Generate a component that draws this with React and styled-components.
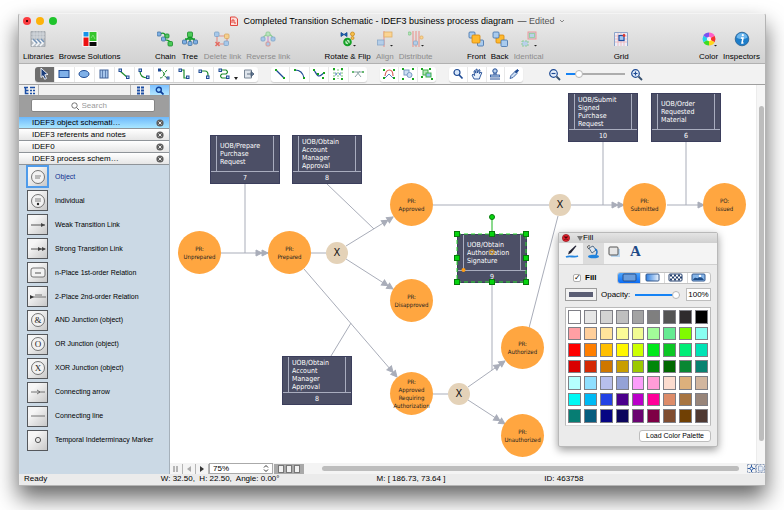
import React from 'react'
import styled, { createGlobalStyle } from 'styled-components';

const GREEN = '#1e8a2c'
const NAVY = '#1f4b94'

/* ---------- small drawing helpers ---------- */

const Pic = ({ w = 16, h = w, box, children }) => (
  <svg width={w} height={h} viewBox={`0 0 ${box || w} ${box ? (box * h) / w : h}`} fill="none" aria-hidden="true">
    {children}
  </svg>
)

const Sq = ({ x, y, s = 3, fill = '#cfe0f5', stroke = NAVY }) => (
  <rect x={x} y={y} width={s} height={s} fill={fill} stroke={stroke} strokeWidth="1" />
)

const Dot = ({ x, y, fill = '#18a51e' }) => <rect x={x} y={y} width="2" height="2" fill={fill} />

const Block = ({ x, y, s = 5, fill = '#7fb0e4', stroke = '#41719f' }) => (
  <rect x={x} y={y} width={s} height={s} rx="1" fill={fill} stroke={stroke} strokeWidth=".8" />
)

/* ---------- toolbar icons ---------- */

const toolbarIcons = {
  libraries: (
    <>
      <rect x="1" y="0" width="14" height="16" rx="1" fill="#b9bfc5" stroke="#94999e" strokeWidth=".8" />
      <path d="M4 0v8M7 0v8M10 0v8M13 0v8M1 3h14M1 6h14" stroke="#dfe3e7" strokeWidth=".6" />
      <path d="M2 9l3 3-3 3M6 9l3 3-3 3M10 9l3 3-3 3" stroke="#f4f7fb" strokeWidth="1.6" />
      <path d="M3 8l4 4M7 8l4 4M11 8l3 3" stroke="#7293b8" strokeWidth="1.2" />
    </>
  ),
  browse: (
    <>
      <rect x="0" y="0" width="16" height="16" rx="1" fill="#fff" stroke="#d5d5d5" strokeWidth=".6" />
      <rect x="1.5" y="1" width="5" height="4.5" fill="#1693e8" />
      <rect x="7.5" y="1" width="7" height="9" fill="#35c52c" />
      <rect x="1.5" y="6.5" width="5" height="8.5" fill="#ec1010" />
      <rect x="7.5" y="11" width="7" height="4" fill="#0a0a0a" />
      <path d="M9 7l2-3 2 4" stroke="#8be385" strokeWidth=".8" />
    </>
  ),
  chain: (
    <>
      <path d="M3 3c4-2 6 0 5 4s5 0 6 6" stroke="#159e2b" strokeWidth="1.2" />
      <Block x="0" y="1" s={4} />
      <Block x="4.500" y="6" s={4} />
      <Block x="8" y="3" s={4} fill="#57c566" stroke="#188a2a" />
      <Block x="11" y="10.5" s={4.5} fill="#4ccb58" stroke="#188a2a" />
    </>
  ),
  tree: (
    <>
      <path d="M8 5L2 11M8 5v7M8 5l6 6M3 8h10" stroke="#159e2b" strokeWidth="1.4" />
      <Block x="5.5" y="1" fill="#4ccb58" stroke="#188a2a" />
      <Block x=".5" y="9" s={4} />
      <Block x="6" y="10.5" s={4} />
      <Block x="11.5" y="9" s={4} />
    </>
  ),
  deleteLink: (
    <>
      <path d="M3 4v9h10V5H5" stroke="#e2918a" strokeWidth="1.2" />
      <Block x=".5" y="1" s={4.5} fill="#a7c8ea" stroke="#7fa3c7" />
      <Block x="10.5" y="3" s={4.5} fill="#f5cf8e" stroke="#d8a860" />
      <Block x="10" y="10" s={4.5} fill="#a7c8ea" stroke="#7fa3c7" />
      <path d="M1.500 11l4 4M5.500 11l-4 4" stroke="#e36a60" strokeWidth="1.5" />
    </>
  ),
  reverseLink: (
    <>
      <path d="M3 9c0-6 9-8 10-1" stroke="#8fd094" strokeWidth="1.4" />
      <path d="M8 5v6" stroke="#c89adb" strokeWidth="1.3" />
      <Block x="1" y="6" s={4} fill="#a7c8ea" stroke="#7fa3c7" />
      <Block x="6" y="1" s={4} fill="#b9e4bd" stroke="#8ec894" />
      <Block x="11" y="6" s={4} fill="#a7c8ea" stroke="#7fa3c7" />
      <Block x="6" y="11" s={4} fill="#a7c8ea" stroke="#e08a82" />
    </>
  ),
  rotate: (
    <>
      <path d="M1 1.500l3 2 3-2v4l-3-2-3 2z" fill="#1e62b4" stroke="#134a8d" strokeWidth=".8" />
      <circle cx="12.500" cy="3" r="2" fill="#f8c04b" stroke="#c98a1a" strokeWidth=".8" />
      <circle cx="12.500" cy="7" r="1.500" fill="#f8c04b" stroke="#c98a1a" strokeWidth=".8" />
      <circle cx="7.500" cy="11" r="3.300" fill="#b6ecb9" stroke="#14a326" strokeWidth="2" />
      <path d="M5 8l5 6" stroke="#0e7e1b" strokeWidth="1" />
      <path d="M13 14h3l-1.500 1.500z" fill="#222" />
    </>
  ),
  align: (
    <>
      <path d="M7 0v16" stroke="#eb8e86" strokeWidth="1" />
      <rect x="7" y="1" width="8" height="5" fill="#fbd493" stroke="#dfae64" strokeWidth=".8" />
      <rect x=".500" y="9" width="6.500" height="5" fill="#b4cee9" stroke="#89a9ca" strokeWidth=".8" />
      <path d="M13 14h3l-1.500 1.500z" fill="#222" />
    </>
  ),
  distribute: (
    <>
      <path d="M5 0v16M8 0v16M11 0v16" stroke="#eb8e86" strokeWidth="1" />
      <Block x="0" y="1" s={3} fill="#b9e4bd" stroke="#7cc283" />
      <Block x="5.500" y="10" s={4} fill="#b4cee9" stroke="#89a9ca" />
      <Block x="12" y="5" s={3} fill="#fbd493" stroke="#dfae64" />
      <path d="M13 14h3l-1.500 1.500z" fill="#222" />
    </>
  ),
  front: (
    <>
      <Block x="1" y="1" s={6} fill="#a9cbee" stroke="#3f6fa8" />
      <Block x="9.500" y="9" s={6} fill="#a9cbee" stroke="#3f6fa8" />
      <Block x="4" y="4" s={8} fill="#ffb92e" stroke="#d68508" />
    </>
  ),
  back: (
    <>
      <Block x="4" y="4" s={8} fill="#ffb92e" stroke="#d68508" />
      <Block x="1" y="1" s={6} fill="#a9cbee" stroke="#3f6fa8" />
      <Block x="9" y="9" s={6.5} fill="#a9cbee" stroke="#3f6fa8" />
    </>
  ),
  identical: (
    <>
      <rect x="7" y="1" width="8" height="7" fill="#b9d0ea" stroke="#ee9c96" />
      <rect x="8.500" y="2.500" width="5" height="4" stroke="#8ecf94" strokeWidth=".8" />
      <rect x="1" y="10" width="6" height="5" fill="#b9d0ea" stroke="#8ecf94" strokeDasharray="2 1" />
      <path d="M13 14h3l-1.500 1.500z" fill="#222" />
    </>
  ),
  grid: (
    <>
      <path d="M1.500 15V1.500h13V15" fill="#eceef8" stroke="#8ea4ca" />
      <path d="M5 2v13M8 2v13M11 2v13M2 5h12M2 8h12M2 11h12" stroke="#f0aeb2" strokeWidth=".8" />
      <rect x="6" y="4.500" width="5" height="5" fill="#a4c7f0" stroke="#1d4fa5" strokeWidth="1.200" />
      <circle cx="11" cy="4.500" r="1.400" fill="#e0382e" />
    </>
  ),
  color: (
    <>
      <path d="M8 8V1.500A6.500 6.500 0 0 1 13.600 4.800z" fill="#ff5dc8" />
      <path d="M8 8l5.600-3.200a6.500 6.500 0 0 1 0 6.400z" fill="#f7302f" />
      <path d="M8 8l5.600 3.200A6.500 6.500 0 0 1 8 14.500z" fill="#ffd51b" />
      <path d="M8 8v6.500a6.500 6.500 0 0 1-5.600-3.300z" fill="#3fdc24" />
      <path d="M8 8l-5.600 3.200a6.500 6.500 0 0 1 0-6.400z" fill="#22d2e8" />
      <path d="M8 8L2.400 4.800A6.500 6.500 0 0 1 8 1.500z" fill="#7a53f0" />
      <circle cx="8" cy="8" r="2.200" fill="#fff" opacity=".85" />
      <path d="M13 14h3l-1.500 1.500z" fill="#222" />
    </>
  ),
  inspectors: (
    <>
      <circle cx="8" cy="8" r="6.800" fill="#1d7dc9" stroke="#2a5f91" strokeWidth=".8" />
      <path d="M2.500 6.500a5.600 5.600 0 0 1 11 0c-3 2-8 2-11 0z" fill="#6db6ec" />
      <circle cx="8.800" cy="4.200" r="1.100" fill="#fff" />
      <path d="M7 7h2l-1 5h1.500" stroke="#fff" strokeWidth="1.500" />
    </>
  ),
}

/* ---------- drawing tool icons, 12 x 12 ---------- */

const toolIcons = {
  pointer: <path d="M3 0l7 6.500-3.200.3 1.700 3.600-1.800.9L5 7.700 3 9.500z" fill="#1c3f7c" stroke="#fff" strokeWidth=".9" />,
  rect: <rect x="1" y="2.500" width="10" height="7" fill="#7fb0e8" stroke={NAVY} />,
  ellipse: <ellipse cx="6" cy="6" rx="5" ry="3.500" fill="#7fb0e8" stroke={NAVY} />,
  text: (
    <>
      <rect x="2" y="2" width="8" height="8" fill="#a7c6ec" stroke="#41629a" />
      <path d="M4.500 2v8M7.500 2v8" stroke="#41629a" strokeWidth=".7" />
    </>
  ),
  line: <><path d="M2 3l8 7" stroke={GREEN} strokeWidth="1.200" /><Sq x="1" y="1" s={2.5} /><Sq x="8.500" y="8" s={2.5} /></>,
  arc: <><path d="M2 3c0 5 3 7 8 7" stroke={GREEN} strokeWidth="1.200" /><Sq x="1" y="1" s={2.5} /><Sq x="8.500" y="8" s={2.5} /></>,
  split: (
    <>
      <path d="M2 2c6 1 2 7 8 8M2 10c5 0 4-8 8-8" stroke={GREEN} strokeDasharray="3 1" />
      <Sq x=".500" y="1" s={2} /><Sq x="9" y="9" s={2} />
    </>
  ),
  elbow: <><path d="M2 2h4v8h4" stroke={GREEN} strokeWidth="1.200" /><Sq x="1" y="1" s={2.5} /><Sq x="8.500" y="8" s={2.5} /></>,
  round: <><path d="M2 3h5q3 0 3 4v3" stroke={GREEN} strokeWidth="1.200" /><Sq x="1" y="2" s={2.5} /><Sq x="8.500" y="8" s={2.5} /></>,
  snake: <><path d="M2 2h6q3 2 0 4H4q-3 2 0 4h5" stroke={GREEN} strokeWidth="1.200" /><Sq x="1" y="1" s={2.5} /><Sq x="8.500" y="8" s={2.5} /></>,
  page: (
    <>
      <path d="M1.500 2h7v8h-7z" fill="#dfe5ec" stroke="#7a8796" />
      <path d="M4 6h5M8 3.500L11 6 8 8.500z" stroke="#3c5068" fill="#6c83a0" strokeWidth=".8" />
    </>
  ),
  straight: <><path d="M2 2l8 8" stroke={NAVY} strokeWidth="1.200" /><Dot x="1" y="1" /><Dot x="9" y="9" /></>,
  curve: <><path d="M1 2c5 0 8 3 9 8" stroke={NAVY} strokeWidth="1.200" /><Dot x="0" y="1" /><Dot x="9" y="9" /></>,
  spline: <><path d="M1 2c2 3 3 6 5 6s3-2 5-3" stroke={NAVY} strokeWidth="1.200" /><Dot x="0" y="1" /><Dot x="4" y="5" /><Dot x="10" y="4" /><Dot x="9" y="9" /></>,
  mirror: (
    <>
      <path d="M2 1v10M10 1v10M6 1v10" stroke="#7bc77f" strokeDasharray="2 1" />
      <path d="M3.500 4v4L5 6zM8.500 4v4L7 6z" fill="#2c62ab" />
      <Dot x="1" y="0" /><Dot x="9" y="0" /><Dot x="1" y="10" /><Dot x="9" y="10" />
    </>
  ),
  cut: <><path d="M0 4h12M3 9l5-6M9 9L5 4" stroke="#8ba5a6" /><Dot x="0" y="3" fill="#66b870" /><Dot x="10" y="3" fill="#66b870" /></>,
  editArc: <><path d="M2 8c1-8 8-8 8 0" stroke="#d96058" strokeWidth="1.200" /><path d="M2 10l4-4 4 4" stroke="#5c86bd" /><Dot x="0" y="1" /><Dot x="10" y="1" /><Dot x="0" y="9" /><Dot x="10" y="9" /></>,
  group: (
    <>
      <rect x="2" y="2" width="5" height="5" fill="#cddff3" stroke="#7b9cc4" /><circle cx="7.500" cy="7" r="2.500" fill="#cddff3" stroke="#7b9cc4" />
      <Dot x="0" y="0" /><Dot x="10" y="0" /><Dot x="0" y="10" /><Dot x="10" y="10" />
    </>
  ),
  ungroup: (
    <>
      <rect x="2" y="2" width="5" height="5" fill="#b9e5bd" stroke="#3fb04b" /><rect x="5" y="5" width="5" height="4" fill="#9cc3ee" stroke="#3fb04b" />
      <Dot x="0" y="0" /><Dot x="8" y="0" /><Dot x="0" y="8" /><Dot x="10" y="10" />
    </>
  ),
  zoom: <><circle cx="5" cy="4.500" r="3" fill="#d7e7fa" stroke={NAVY} strokeWidth="1.200" /><path d="M7.200 7l3.300 3.500" stroke={NAVY} strokeWidth="1.700" /></>,
  hand: <path d="M3 11L1 7l1-.8 1.600 1.400L3 3l1-.4.9 2.600.1-4 1.100 0 .5 3.800L8 1.600l1 .4-.6 3.600L10 4l.8.7L9 9l-.6 2z" fill="#e8f1fc" stroke={NAVY} strokeWidth=".9" />,
  stamp: (
    <>
      <circle cx="6" cy="3" r="2.200" fill="#bcd3ee" stroke={NAVY} /><path d="M5 5v2M7 5v2" stroke={NAVY} />
      <rect x="1.500" y="7" width="9" height="2" fill="#bcd3ee" stroke={NAVY} strokeWidth=".8" /><path d="M1 11h10" stroke={NAVY} />
    </>
  ),
  dropper: <><path d="M2 10.500l1-3 4-4 2 2-4 4z" fill="#cfe0f5" stroke={NAVY} strokeWidth=".8" /><path d="M7 3.500L9.500 1.500l1 1L8.500 5z" fill={NAVY} stroke={NAVY} /></>,
}

const Magnifier = ({ plus }) => (
  <Pic w={13}>
    <circle cx="5.500" cy="5.500" r="3.800" fill="#e6f0fb" stroke={NAVY} strokeWidth="1.200" />
    <path d="M8.500 8.500l3.500 3.500" stroke="#37506e" strokeWidth="1.800" />
    <path d={plus ? 'M3.500 5.500h4M5.500 3.500v4' : 'M3.500 5.500h4'} stroke={NAVY} strokeWidth="1.200" />
  </Pic>
)

/* ---------- library tiles, 20 x 20 ---------- */

const ring = <circle cx="10" cy="10" r="6.500" fill="#f2f2f2" stroke="#555" strokeWidth=".8" />
const shaft = <path d="M3 10h14" stroke="#555" />

const letterTile = (ch) => (
  <>
    {ring}
    <text x="10" y="13" textAnchor="middle" fontSize="9" fontFamily="Liberation Serif, serif" fill="#222">{ch}</text>
  </>
)

const libraryItems = [
  { name: 'Object', active: true, art: <>{ring}<path d="M7 9h6M7 11h5" stroke="#666" strokeWidth=".8" /></> },
  { name: 'Individual', art: <>{ring}<path d="M7 8h6M7 10h6" stroke="#666" strokeWidth=".8" /><circle cx="10" cy="13" r="1.200" fill="#222" /></> },
  { name: 'Weak Transition Link', art: <>{shaft}<path d="M13 8l4 2-4 2z" fill="#444" /></> },
  { name: 'Strong Transition Link', art: <>{shaft}<path d="M10 8l4 2-4 2zM14 8l4 2-4 2z" fill="#444" /></> },
  { name: 'n-Place 1st-order Relation', art: <><rect x="3" y="5" width="14" height="9" rx="2" fill="#f2f2f2" stroke="#555" strokeWidth=".8" /><path d="M7 10h6" stroke="#555" /></> },
  { name: '2-Place 2nd-order Relation', art: <><path d="M3 10h15M7 8h7" stroke="#555" strokeWidth=".8" /><path d="M2 8l4 2-4 2z" fill="#333" /></> },
  { name: 'AND Junction (object)', art: letterTile('&') },
  { name: 'OR Junction (object)', art: letterTile('O') },
  { name: 'XOR Junction (object)', art: letterTile('X') },
  { name: 'Connecting arrow', art: <><path d="M3 10h14M9 8l3 2-3 2" stroke="#555" strokeWidth=".8" /></> },
  { name: 'Connecting line', art: <path d="M3 10h14" stroke="#555" strokeWidth=".8" /> },
  { name: 'Temporal Indeterminacy Marker', art: <circle cx="10" cy="10" r="2.600" stroke="#555" /> },
]

const libraries = ['IDEF3 object schemati…', 'IDEF3 referents and notes', 'IDEF0', 'IDEF3 process schem…']

/* ---------- toolbar data ---------- */

const toolbarGroups = [
  { grow: 1, items: [['libraries', 'Libraries'], ['browse', 'Browse Solutions']] },
  { grow: 1, items: [['chain', 'Chain'], ['tree', 'Tree'], ['deleteLink', 'Delete link', true], ['reverseLink', 'Reverse link', true]] },
  { grow: 1, items: [['rotate', 'Rotate & Flip'], ['align', 'Align', true], ['distribute', 'Distribute', true]] },
  { grow: 2, items: [['front', 'Front'], ['back', 'Back'], ['identical', 'Identical', true]] },
  { grow: 2, items: [['grid', 'Grid']] },
  { grow: 0, items: [['color', 'Color'], ['inspectors', 'Inspectors']] },
]

const toolGroups = [
  { width: 223, tools: ['pointer', 'rect', 'ellipse', 'text', 'line', 'arc', 'split', 'elbow', 'round', 'snake', 'more', 'page'] },
  { width: 96, tools: ['straight', 'curve', 'spline', 'mirror', 'cut'] },
  { width: 56, tools: ['editArc', 'group', 'ungroup'] },
  { width: 74, tools: ['zoom', 'hand', 'stamp', 'dropper'] },
]

/* ---------- diagram data, centres of nodes on the canvas ---------- */

const states = [
  { x: 30, y: 168, text: ['PR:', 'Unprepared'] },
  { x: 120, y: 168, text: ['PR:', 'Prepared'] },
  { x: 242, y: 120, text: ['PR:', 'Approved'] },
  { x: 242, y: 216, text: ['PR:', 'Disapproved'] },
  { x: 242, y: 309, text: ['PR:', 'Approved', 'Requiring', 'Authorization'] },
  { x: 353, y: 263, text: ['PR:', 'Authorized'] },
  { x: 353, y: 351, text: ['PR:', 'Unauthorized'] },
  { x: 475, y: 120, text: ['PR:', 'Submitted'] },
  { x: 555, y: 120, text: ['PO:', 'Issued'] },
]

const junctions = [{ x: 167, y: 168 }, { x: 390, y: 120 }, { x: 289, y: 309 }]

const units = [
  { x: 40, y: 50, n: 7, text: ['UOB/Prepare', 'Purchase', 'Request'] },
  { x: 122, y: 50, n: 8, text: ['UOB/Obtain', 'Account', 'Manager', 'Approval'] },
  { x: 112, y: 271, n: 8, text: ['UOB/Obtain', 'Account', 'Manager', 'Approval'] },
  { x: 287, y: 149, n: 9, text: ['UOB/Obtain', 'Authorization', 'Signature'] },
  { x: 398, y: 8, n: 10, text: ['UOB/Submit', 'Signed', 'Purchase', 'Request'] },
  { x: 481, y: 8, n: 6, text: ['UOB/Order', 'Requested', 'Material'] },
]

// [x1, y1, x2, y2, number of arrow heads]
const links = [
  [51, 168, 98, 168, 2],
  [75, 99, 75, 168, 0],
  [157, 99, 204, 144, 0],
  [141, 168, 156, 168, 0],
  [176, 161, 223, 132, 2],
  [176, 174, 223, 204, 2],
  [134, 184, 227, 292, 2],
  [161, 271, 181, 238, 0],
  [263, 120, 379, 120, 0],
  [401, 120, 454, 120, 2],
  [433, 57, 433, 120, 0],
  [497, 120, 534, 120, 1],
  [516, 57, 516, 120, 0],
  [322, 198, 322, 285, 0],
  [263, 309, 278, 309, 0],
  [298, 302, 335, 276, 2],
  [298, 315, 335, 339, 2],
  [359, 243, 388, 131, 0],
]

const palette = [
  '#ffffff', '#e6e6e6', '#d3d3d3', '#bfbfbf', '#a3a3a3', '#7f7f7f', '#545454', '#2f2b2d', '#000000',
  '#ff9fa4', '#ffcf9b', '#ffe49b', '#fbfb97', '#f1fb93', '#a2fb99', '#65ea92', '#80fb00', '#88fff2',
  '#fe0000', '#ff7f00', '#ffbf00', '#fff700', '#ccff00', '#00e81b', '#0cc624', '#00ee76', '#00e3b5',
  '#d90000', '#d42a05', '#cf7700', '#c99e00', '#9cc900', '#008709', '#006700', '#098733', '#098270',
  '#b5ffff', '#90dfff', '#b7bfec', '#94a2d6', '#fb9dfa', '#ff9cd8', '#fcdccf', '#dcb07c', '#d2b69f',
  '#00f8f4', '#00baf5', '#2242e4', '#4b008b', '#ba00c9', '#fe0099', '#dd8c6a', '#a87541', '#98857a',
  '#067d73', '#075d7f', '#060583', '#0c055d', '#6a0371', '#7e0045', '#804d30', '#704004', '#4f3932',
]

const Link = ({ x1, y1, x2, y2, heads }) => {
  const angle = (Math.atan2(y2 - y1, x2 - x1) * 180) / Math.PI
  return (
    <>
      <line x1={x1} y1={y1} x2={x2} y2={y2} />
      <g transform={`translate(${x2} ${y2}) rotate(${angle})`}>
        {heads > 0 && <path d="M0 0l-6-3v6z" />}
        {heads > 1 && <path d="M-6 0l-6-3v6z" />}
      </g>
    </>
  )
}

const Diagram = () => (
  <>
    <Links>
      {links.map(([x1, y1, x2, y2, heads], i) => (
        <Link key={i} x1={x1} y1={y1} x2={x2} y2={y2} heads={heads} />
      ))}
    </Links>
    {states.map((s) => (
      <State key={s.text.join()} $x={s.x} $y={s.y}>
        {s.text.map((t) => <span key={t}>{t}</span>)}
      </State>
    ))}
    {junctions.map((j) => <Junction key={j.x} $x={j.x} $y={j.y}>X</Junction>)}
    {units.map((u) => (
      <Unit key={u.x} $x={u.x} $y={u.y}>
        <UnitText>{u.text.map((t) => <span key={t}>{t}</span>)}</UnitText>
        <UnitNumber>{u.n}</UnitNumber>
      </Unit>
    ))}
    <Selection viewBox="0 0 76 76">
      <rect x="3" y="21" width="69" height="48" stroke="#2fe02f" strokeDasharray="4 3" />
      <path d="M38 6v15" stroke="#18b51d" />
      <circle cx="38" cy="4" r="2.500" fill="#06d40f" stroke="#08790c" />
      {[[3, 21], [38, 21], [72, 21], [3, 45], [72, 45], [3, 69], [38, 69], [72, 69]].map(([x, y]) => (
        <rect key={`${x} ${y}`} x={x - 2.5} y={y - 2.5} width="5" height="5" fill="#06d40f" stroke="#08790c" />
      ))}
      <circle cx="38" cy="39" r="2.200" stroke="#f5a300" />
      <circle cx="9.500" cy="57" r="2" fill="#ff9c12" />
    </Selection>
  </>
)

const FillPanel = () => (
  <Panel>
    <PanelTitle>
      <PanelClose aria-label="Close">
        <Pic w={8}>
          <circle cx="4" cy="4" r="3.600" fill="#e2202c" stroke="#8d1119" strokeWidth=".7" />
          <path d="M2.500 2.500l3 3M5.500 2.500l-3 3" stroke="#4d0508" strokeWidth="1.200" />
        </Pic>
      </PanelClose>
      <Pic w={6}><path d="M0 1h6L3 6z" fill="#777" /></Pic>
      Fill
    </PanelTitle>
    <PanelTabs>
      <PanelTab aria-label="Line">
        <Pic w={14}><path d="M11.500 1L6 8l-3 1.500L4 6.500 10.500.5z" fill="#223" /><path d="M1 12c4-2 8 1 12-1" stroke="#2586e0" strokeWidth="1.800" /></Pic>
      </PanelTab>
      <PanelTab $active aria-label="Fill">
        <Pic w={14}>
          <path d="M3 3l4-2 3 4-4 3z" fill="#dfe6ee" stroke="#33506e" strokeWidth=".8" />
          <path d="M9 4c3 1 2 4 1 6" stroke="#1772cf" strokeWidth="1.500" />
          <ellipse cx="7.500" cy="11.500" rx="5.500" ry="1.800" fill="#1f83de" />
          <path d="M3 4C0 2 2 0 4 1" stroke="#333" strokeWidth=".8" />
        </Pic>
      </PanelTab>
      <PanelTab aria-label="Shadow">
        <Pic w={14}><rect x="4" y="4" width="9" height="8" fill="#b8d5ee" /><rect x="2" y="2" width="9" height="8" rx="1" fill="#e6e6e6" stroke="#555" /></Pic>
      </PanelTab>
      <PanelTab aria-label="Text"><Letter>A</Letter></PanelTab>
    </PanelTabs>
    <PanelBody>
      <PanelRow>
        <Check><input type="checkbox" defaultChecked />Fill</Check>
        <Kinds>
          <Kind $active aria-label="Solid"><Pic w={15} h={9}><rect x="1" y="1" width="13" height="7" rx="1" fill="#6a9ddb" stroke="#28518c" /></Pic></Kind>
          <Kind aria-label="Gradient">
            <Pic w={15} h={9}>
              <linearGradient id="fade"><stop stopColor="#2f7fe0" /><stop offset="1" stopColor="#eef5fd" /></linearGradient>
              <rect x="1" y="1" width="13" height="7" rx="1" fill="url(#fade)" stroke="#35588c" />
            </Pic>
          </Kind>
          <Kind aria-label="Pattern">
            <Pic w={15} h={9}>
              <rect x="1" y="1" width="13" height="7" rx="1" fill="#fff" stroke="#24406e" />
              <path d="M2 2.500h12M2 6.500h12" stroke="#24406e" strokeWidth="2" strokeDasharray="2 2" />
              <path d="M4 4.500h10" stroke="#24406e" strokeWidth="2" strokeDasharray="2 2" />
            </Pic>
          </Kind>
          <Kind aria-label="Picture">
            <Pic w={15} h={9}><rect x="1" y="1" width="13" height="7" rx="1" fill="#86b6ea" stroke="#35588c" /><path d="M2 7c2-4 4-1 5-2s3-2 6 2z" fill="#1d4c88" /><circle cx="9" cy="3" r="1.200" fill="#fff" /></Pic>
          </Kind>
        </Kinds>
      </PanelRow>
      <PanelRow>
        <Well aria-label="Fill color" />
        <OpacityLabel htmlFor="opacity">Opacity:</OpacityLabel>
        <Range id="opacity" type="range" defaultValue="100" $fill={95} />
        <Percent aria-label="Opacity value" defaultValue="100%" />
      </PanelRow>
      <Palette>
        {palette.map((c) => <Swatch key={c} $color={c} aria-label={c} />)}
      </Palette>
      <Load>Load Color Palette</Load>
    </PanelBody>
  </Panel>
)

const Sidebar = () => (
  <Side>
    <SideTabs>
      <SideTab aria-label="Tree">
        <Pic w={12} h={9}><path d="M1 1.500h4M2.500 2v5.500h3M2.500 4.500h3M7 1.500h5M7 4.500h2M10 4.500h2M7 7.500h2M10 7.500h2" stroke="#1d4fa5" strokeWidth="1.500" /></Pic>
      </SideTab>
      <SideBlank />
      <SideTab aria-label="Grid">
        <Pic w={9}>{[0, 3, 6].map((y) => <path key={y} d={`M1 ${y + 1.5}h3M5 ${y + 1.5}h3`} stroke="#1d4fa5" strokeWidth="2" />)}</Pic>
      </SideTab>
      <SideTab $active aria-label="Search">
        <Pic w={9}><circle cx="3.800" cy="3.800" r="2.500" stroke="#0e3f9a" strokeWidth="1.400" /><path d="M5.600 5.600L8.500 8.500" stroke="#0e3f9a" strokeWidth="1.800" /></Pic>
      </SideTab>
    </SideTabs>
    <SearchBand>
      <SearchBox>
        <Pic w={8}><circle cx="3.500" cy="3.500" r="2.700" stroke="#666" strokeWidth=".9" /><path d="M5.500 5.500L8 8" stroke="#666" /></Pic>
        <input type="text" aria-label="Search" placeholder="Search" />
      </SearchBox>
    </SearchBand>
    {libraries.map((name, i) => (
      <LibraryRow key={name} $active={i === 0}>
        <button>{name}</button>
        <button aria-label={`Close ${name}`}>
          <Pic w={8}><circle cx="4" cy="4" r="3.600" fill="#5e5e5e" /><path d="M2.500 2.500l3 3M5.500 2.500l-3 3" stroke="#e8e8e8" /></Pic>
        </button>
      </LibraryRow>
    ))}
    <Items>
      {libraryItems.map((item) => (
        <Item key={item.name} $active={item.active}>
          <Tile $active={item.active}><Pic w={20}>{item.art}</Pic></Tile>
          {item.name}
        </Item>
      ))}
    </Items>
  </Side>
)

const App = () => {
  return (
    <>
      <GlobalStyle />
      <Page>
        <Window>
          <Header>
            <TitleBar>
              <Lights>
                <Light $color="#fb3b3f" aria-label="Close"><i /></Light>
                <Light $color="#fdb20a" aria-label="Minimize" />
                <Light $color="#1fc42c" aria-label="Zoom" />
              </Lights>
              <Title>
                <Pic w={10} h={10}><path d="M1.500 1h5l2 2v6.500h-7z" fill="#fbdcd8" stroke="#e0453c" /><path d="M3 7V4h2v3h2" stroke="#e0453c" /></Pic>
                Completed Transition Schematic - IDEF3 business process diagram
                <Edited>— <button>Edited</button></Edited>
                <Pic w={6} h={4}><path d="M1 1l2 2 2-2" stroke="#888" /></Pic>
              </Title>
            </TitleBar>
            <Toolbar>
              {toolbarGroups.map((g, i) => (
                <React.Fragment key={i}>
                  <ToolbarGroup>
                    {g.items.map(([icon, label, off]) => (
                      <ToolbarButton key={icon} disabled={off}>
                        <Pic w={16}>{toolbarIcons[icon]}</Pic>
                        {label}
                      </ToolbarButton>
                    ))}
                  </ToolbarGroup>
                  <Spacer $grow={g.grow} />
                </React.Fragment>
              ))}
            </Toolbar>
          </Header>

          <ToolStrip>
            {toolGroups.map((g) => (
              <Segments key={g.width} $width={g.width}>
                {g.tools.map((t) => t === 'more' ? (
                  <MoreTools key={t} aria-label="More connectors"><Pic w={4}><path d="M0 1h4L2 4z" fill="#222" /></Pic></MoreTools>
                ) : (
                  <Segment key={t} $active={t === 'pointer'} aria-label={t}><Pic w={12}>{toolIcons[t]}</Pic></Segment>
                ))}
              </Segments>
            ))}
            <Zoomer>
              <PlainButton aria-label="Zoom out"><Magnifier /></PlainButton>
              <Range type="range" aria-label="Zoom" defaultValue="18" $fill={22} />
              <PlainButton aria-label="Zoom in"><Magnifier plus /></PlainButton>
            </Zoomer>
          </ToolStrip>

          <Main>
            <Sidebar />
            <Work>
              <CanvasRow>
                <Canvas>
                  <Diagram />
                  <FillPanel />
                </Canvas>
                <VScroll><VThumb /></VScroll>
              </CanvasRow>
              <Footer>
                <FootButton aria-label="Split"><Pic w={8}><path d="M2 1v6M5 1v6" stroke="#777" /></Pic></FootButton>
                <FootButton aria-label="Previous page"><Pic w={8}><path d="M6 1v6L2 4z" fill="#aaa" /></Pic></FootButton>
                <FootButton aria-label="Next page"><Pic w={8}><path d="M2 1v6l4-3z" fill="#333" /></Pic></FootButton>
                <Scale>
                  <select aria-label="Scale" defaultValue="75%"><option>75%</option><option>100%</option></select>
                  <Pic w={6} h={9}><path d="M1 3.500l2-2 2 2M1 5.500l2 2 2-2" stroke="#333" /></Pic>
                </Scale>
                <Pages><i /><i /><i /></Pages>
                <HScroll />
                <PlainButton aria-label="Fit page">
                  <Pic w={9}><rect x=".500" y=".500" width="8" height="8" stroke="#8d9db8" strokeDasharray="2 1" /><path d="M4.500 1v7M1 4.500h7" stroke="#2e5ca4" /><circle cx="4.500" cy="4.500" r="1.500" fill="#fff" stroke="#2e5ca4" /></Pic>
                </PlainButton>
                <PlainButton aria-label="Actual size">
                  <Pic w={9}><rect x=".500" y=".500" width="8" height="8" stroke="#8d9db8" strokeDasharray="2 1" /><path d="M2.500 2h3l1.500 1.500V7H2.500z" fill="#e7eef8" stroke="#8aa0c2" strokeWidth=".8" /></Pic>
                </PlainButton>
              </Footer>
            </Work>
          </Main>

          <Status>
            <span>Ready</span>
            <span>W: 32.50,&nbsp; H: 22.50,&nbsp; Angle: 0.00°</span>
            <span>M: [ 186.73, 73.64 ]</span>
            <span>ID: 463758</span>
          </Status>
        </Window>
      </Page>
    </>
  )
}

const GlobalStyle = createGlobalStyle`
  * { box-sizing: border-box; }
  body {
    margin: 0;
    background: #fff;
    color: #000;
    font-family: 'Liberation Sans', Arial, sans-serif;
    font-size: 8px;
    line-height: 10px;
  }
  button, input, select {
    margin: 0;
    padding: 0;
    border: 0;
    background: none;
    color: inherit;
    font: inherit;
  }
  svg { display: block; flex: none; }
`
const Page = styled.div`
  display: flex;
  min-height: 100vh;
  padding: 13px 18px 24px;
  overflow: hidden;
`
const Window = styled.div`
  flex: 1;
  min-width: 0;
  display: flex;
  flex-direction: column;
  border: 1px solid #b4b4b4;
  border-top-color: #f4f4f4;
  border-radius: 3px;
  background: #ebebeb;
  box-shadow: 0 12px 22px rgba(0, 0, 0, 0.6);
`
const Header = styled.header`
  background: linear-gradient(#ececec, #d2d2d2);
  border-bottom: 1px solid #b1b1b1;
  border-radius: 3px 3px 0 0;
`
const TitleBar = styled.div`
  display: flex;
  align-items: center;
  height: 14px;
  padding: 0 4px;
`
const Lights = styled.div`
  display: flex;
  gap: 5px;
  width: 36px;
`
const Light = styled.button`
  display: grid;
  place-items: center;
  width: 8px;
  height: 8px;
  border-radius: 50%;
  background: ${(p) => p.$color};

  i {
    width: 2px;
    height: 2px;
    background: #4d0407;
  }
`
const Title = styled.h1`
  flex: 1;
  display: flex;
  align-items: center;
  justify-content: center;
  gap: 4px;
  margin: 0;
  padding-right: 26px;
  font-size: 9px;
  font-weight: 400;
  white-space: nowrap;
`
const Edited = styled.span`
  button { color: #555; }
`
const Toolbar = styled.div`
  display: flex;
  padding: 3px 5px 1px 4px;
`
const ToolbarGroup = styled.div`
  display: flex;
  gap: 5px;
`
const Spacer = styled.div`
  flex: ${(p) => p.$grow} 0 0;
`
const ToolbarButton = styled.button`
  display: flex;
  flex-direction: column;
  align-items: center;
  gap: 5px;
  min-width: 18px;
  white-space: nowrap;

  &:disabled { color: #8c8c8c; }
`
const ToolStrip = styled.div`
  display: flex;
  align-items: center;
  gap: 13px;
  height: 21px;
  padding: 0 16px;
  background: #f2f2f2;
  border-bottom: 1px solid #9f9f9f;
`
const Segments = styled.div`
  display: flex;
  width: ${(p) => p.$width}px;
  height: 15px;
  background: #fff;
  border-radius: 3px;
  box-shadow: 0 1px 1px rgba(0, 0, 0, 0.15);
  overflow: hidden;
`
const Segment = styled.button`
  flex: 1;
  display: grid;
  place-items: center;
  min-width: 0;
  background: ${(p) => (p.$active ? '#6e6e6e' : 'none')};

  & + & { border-left: 1px solid #e8e8e8; }
`
const MoreTools = styled.button`
  display: grid;
  place-items: end center;
  width: 6px;
  padding-bottom: 2px;
`
const PlainButton = styled.button`
  display: block;
`
const Zoomer = styled.div`
  display: flex;
  align-items: center;
  gap: 5px;
  width: 95px;
  margin-left: 12px;
`
const Range = styled.input`
  flex: 1;
  appearance: none;
  min-width: 0;
  height: 8px;
  background: linear-gradient(90deg, #1583f5 ${(p) => p.$fill}%, #adadad 0) center / 100% 2px no-repeat;

  &::-webkit-slider-thumb {
    appearance: none;
    width: 8px;
    height: 8px;
    border: 1px solid #b5b5b5;
    border-radius: 50%;
    background: #fff;
  }
`
const Main = styled.main`
  flex: 1;
  display: flex;
`
const Side = styled.aside`
  display: flex;
  flex-direction: column;
  width: 151px;
  border-right: 1px solid #a6b1bb;
`
const SideTabs = styled.div`
  display: flex;
  height: 11px;
  background: #f1f1f1;
  border-bottom: 1px solid #9a9a9a;
`
const SideTab = styled.button`
  display: grid;
  place-items: center;
  width: 19px;
  background: ${(p) => (p.$active ? 'linear-gradient(#7cc0ff, #b2e6ff)' : 'none')};
`
const SideBlank = styled.div`
  flex: 1;
  border: solid #b5b5b5;
  border-width: 0 1px;
`
const SearchBand = styled.div`
  padding: 3px 14px 5px 12px;
  background: #9e9e9e;
`
const SearchBox = styled.label`
  display: flex;
  align-items: center;
  justify-content: center;
  gap: 3px;
  height: 13px;
  background: #fff;
  border: 1px solid #858585;
  border-radius: 2px;

  input {
    width: 34px;
    outline: 0;
  }
  input::placeholder { color: #9a9a9a; }
`
const LibraryRow = styled.div`
  display: flex;
  align-items: center;
  justify-content: space-between;
  height: 12px;
  padding: 0 5px 0 13px;
  border-bottom: 1px solid #8f9499;
  background: ${(p) => (p.$active ? 'linear-gradient(#6db8fb, #a8e6ff)' : 'linear-gradient(#fff, #e6e6e6)')};
`
const Items = styled.div`
  flex: 1;
  display: flex;
  flex-direction: column;
  padding: 0 0 22px 7px;
  background: #cbd9e5;
`
const Item = styled.button`
  flex: 1;
  display: flex;
  align-items: center;
  gap: 6px;
  color: ${(p) => (p.$active ? '#0d2f8f' : '#000')};
  font-size: 7px;
  text-align: left;
`
const Tile = styled.span`
  display: grid;
  place-items: center;
  width: 23px;
  height: 23px;
  border: 1px solid ${(p) => (p.$active ? '#4f9bea' : '#cbd9e5')};
  outline: 1px solid ${(p) => (p.$active ? '#4f9bea' : '#55585c')};
  outline-offset: -2px;
  background: linear-gradient(135deg, #f6f6f6 30%, #c4c4c4);
`
const Work = styled.section`
  flex: 1;
  display: flex;
  flex-direction: column;
  min-width: 0;
`
const CanvasRow = styled.div`
  flex: 1;
  display: flex;
`
const Canvas = styled.div`
  flex: 1;
  position: relative;
  background: #fff;
`
const VScroll = styled.div`
  display: flex;
  justify-content: center;
  width: 9px;
  padding: 21px 0 22px;
  background: #f6f6f6;
  border-left: 1px solid #ececec;
`
const VThumb = styled.div`
  width: 5px;
  border-radius: 3px;
  background: #bdbdbd;
`
const Footer = styled.div`
  display: flex;
  align-items: center;
  height: 11px;
  background: #f4f4f4;
`
const FootButton = styled.button`
  display: grid;
  place-items: center;
  width: 13px;
  height: 10px;
  border-right: 1px solid #b5b5b5;
`
const Scale = styled.div`
  display: flex;
  align-items: center;
  width: 64px;
  height: 11px;
  padding: 0 3px;
  background: #fff;
  border: 1px solid #aaa;

  select {
    flex: 1;
    appearance: none;
    line-height: 9px;
  }
`
const Pages = styled.div`
  display: flex;
  align-items: center;
  justify-content: center;
  gap: 2px;
  width: 30px;
  height: 10px;
  margin-left: 1px;
  background: #a9a9a9;

  i {
    width: 6px;
    height: 8px;
    border: 1px solid #777;
    background: #f1f1f1;
  }
`
const HScroll = styled.div`
  flex: 1;
  height: 5px;
  margin: 0 8px 0 18px;
  border-radius: 3px;
  background: #bdbdbd;
`
const Status = styled.footer`
  display: grid;
  grid-template-columns: 137fr 216fr 168fr 221fr;
  height: 11px;
  padding-left: 5px;
  background: #ebebeb;
`
const Links = styled.svg`
  position: absolute;
  inset: 0;
  width: 100%;
  height: 100%;
  stroke: #a9adb9;
  fill: #a9adb9;
`
const State = styled.div`
  position: absolute;
  left: ${(p) => p.$x - 22}px;
  top: ${(p) => p.$y - 22}px;
  display: flex;
  flex-direction: column;
  align-items: center;
  justify-content: center;
  width: 43px;
  height: 43px;
  border-radius: 50%;
  background: #ffa640;
  color: #222;
  font-family: 'DejaVu Sans Condensed', 'DejaVu Sans', sans-serif;
  font-size: 6px;
  line-height: 8px;
  white-space: nowrap;
`
const Junction = styled.div`
  position: absolute;
  left: ${(p) => p.$x - 11}px;
  top: ${(p) => p.$y - 11}px;
  display: grid;
  place-items: center;
  width: 22px;
  height: 22px;
  border-radius: 50%;
  background: #e4d2b8;
  color: #111;
  font-family: 'DejaVu Sans Condensed', 'DejaVu Sans', sans-serif;
  font-size: 11px;
`
const Unit = styled.div`
  position: absolute;
  left: ${(p) => p.$x}px;
  top: ${(p) => p.$y}px;
  display: flex;
  flex-direction: column;
  width: 70px;
  height: 49px;
  padding: 0 5px;
  background: #4c4f66;
  border: 1px solid #3b3e5c;
  color: #fff;
  font-family: 'DejaVu Sans Condensed', 'DejaVu Sans', sans-serif;
  font-size: 7px;
  line-height: 8px;
`
const UnitText = styled.div`
  display: flex;
  flex-direction: column;
  justify-content: center;
  height: 35px;
  padding-left: 3px;
  border: solid #a9adbf;
  border-width: 0 1px;
  white-space: nowrap;
`
const UnitNumber = styled.div`
  margin: 0 -5px;
  padding-top: 2px;
  border-top: 1px solid #a9adbf;
  text-align: center;
`
const Selection = styled.svg`
  position: absolute;
  left: 284px;
  top: 128px;
  width: 76px;
  height: 76px;
  fill: none;
`
const Panel = styled.div`
  position: absolute;
  left: 388px;
  top: 147px;
  width: 160px;
  border: 1px solid #b9b9b9;
  border-radius: 2px;
  background: #ebebeb;
  box-shadow: 0 3px 8px rgba(0, 0, 0, 0.4);
`
const PanelTitle = styled.div`
  display: flex;
  align-items: center;
  height: 10px;
  padding-left: 3px;
  background: linear-gradient(#e4e4e4, #cfcfcf);
`
const PanelClose = styled.button`
  margin-right: 7px;
`
const PanelTabs = styled.div`
  display: flex;
  height: 22px;
  padding-left: 3px;
  background: #f4f4f4;
  border-bottom: 1px solid #d0d0d0;
`
const PanelTab = styled.button`
  width: 21px;
  padding: 0 3px 3px;
  background: ${(p) => (p.$active ? '#dcdcdc' : 'none')};
`
const Letter = styled.span`
  color: #1d4a87;
  font-family: 'Liberation Serif', serif;
  font-size: 15px;
  font-weight: 700;
`
const PanelBody = styled.div`
  display: flex;
  flex-direction: column;
  gap: 4px;
  padding: 6px 6px 4px;
`
const PanelRow = styled.div`
  display: flex;
  align-items: center;
  height: 13px;
`
const Check = styled.label`
  display: flex;
  align-items: center;
  gap: 4px;
  width: 52px;
  padding-left: 8px;
  font-weight: 700;

  input {
    appearance: none;
    display: grid;
    place-items: center;
    width: 8px;
    height: 8px;
    border: 1px solid #b0b0b0;
    border-radius: 2px;
    background: #fff;
  }
  input:checked::before {
    content: '✓';
    font-family: 'DejaVu Sans', sans-serif;
    font-size: 8px;
    line-height: 6px;
  }
`
const Kinds = styled.div`
  flex: 1;
  display: flex;
  height: 12px;
  border: 1px solid #c3c3c3;
  border-radius: 3px;
  background: #fff;
  overflow: hidden;
`
const Kind = styled.button`
  flex: 1;
  display: grid;
  place-items: center;
  background: ${(p) => (p.$active ? 'linear-gradient(#4ea5fb, #0a6cf5)' : 'none')};

  & + & { border-left: 1px solid #d9d9d9; }
`
const Well = styled.button`
  width: 32px;
  height: 13px;
  margin-right: 4px;
  border: 1px solid #9c9c9c;
  background: #5b5e74;
  box-shadow: inset 0 0 0 3px #f2f2f2;
`
const OpacityLabel = styled.label`
  width: 34px;
`
const Percent = styled.input`
  width: 25px;
  height: 13px;
  margin-left: 6px;
  border: 1px solid #bdbdbd;
  background: #fff;
  text-align: center;
`
const Palette = styled.div`
  display: grid;
  grid-template-columns: repeat(9, 1fr);
  grid-auto-rows: 1fr;
  gap: 3px;
  height: 119px;
  margin-top: 2px;
  padding: 2px;
  border: 1px solid #bababa;
  border-bottom-color: #d9d9d9;
  background: #fff;
`
const Swatch = styled.button`
  border: 1px solid #7f7f86;
  background: ${(p) => p.$color};
`
const Load = styled.button`
  align-self: flex-end;
  width: 72px;
  height: 12px;
  border: 1px solid #bdbdbd;
  border-radius: 3px;
  background: #fff;
  font-size: 7px;
`

export default App
